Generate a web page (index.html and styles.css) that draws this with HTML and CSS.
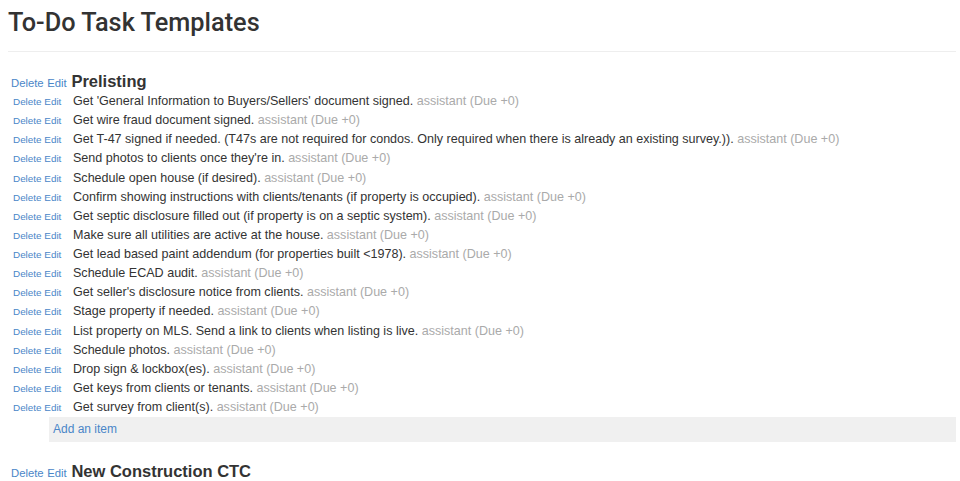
FILE: index.html
```html
<!DOCTYPE html>
<html>
<head>
<meta charset="utf-8">
<link rel="stylesheet" href="styles.css">
</head>
<body>
<div class="page">
  <h1 class="title">To-Do Task Templates</h1>
  <hr class="rule">

  <div class="group">
    <div class="group-head">
      <a class="link">Delete</a> <a class="link">Edit</a> <span class="group-name">Prelisting</span>
    </div>
    <ul class="items">
      <li class="item"><span class="actions"><a class="link">Delete</a> <a class="link">Edit</a></span><span class="text">Get 'General Information to Buyers/Sellers' document signed. <span class="meta">assistant (Due +0)</span></span></li>
      <li class="item"><span class="actions"><a class="link">Delete</a> <a class="link">Edit</a></span><span class="text">Get wire fraud document signed. <span class="meta">assistant (Due +0)</span></span></li>
      <li class="item"><span class="actions"><a class="link">Delete</a> <a class="link">Edit</a></span><span class="text">Get T-47 signed if needed. (T47s are not required for condos. Only required when there is already an existing survey.)). <span class="meta">assistant (Due +0)</span></span></li>
      <li class="item"><span class="actions"><a class="link">Delete</a> <a class="link">Edit</a></span><span class="text">Send photos to clients once they're in. <span class="meta">assistant (Due +0)</span></span></li>
      <li class="item"><span class="actions"><a class="link">Delete</a> <a class="link">Edit</a></span><span class="text">Schedule open house (if desired). <span class="meta">assistant (Due +0)</span></span></li>
      <li class="item"><span class="actions"><a class="link">Delete</a> <a class="link">Edit</a></span><span class="text">Confirm showing instructions with clients/tenants (if property is occupied). <span class="meta">assistant (Due +0)</span></span></li>
      <li class="item"><span class="actions"><a class="link">Delete</a> <a class="link">Edit</a></span><span class="text">Get septic disclosure filled out (if property is on a septic system). <span class="meta">assistant (Due +0)</span></span></li>
      <li class="item"><span class="actions"><a class="link">Delete</a> <a class="link">Edit</a></span><span class="text">Make sure all utilities are active at the house. <span class="meta">assistant (Due +0)</span></span></li>
      <li class="item"><span class="actions"><a class="link">Delete</a> <a class="link">Edit</a></span><span class="text">Get lead based paint addendum (for properties built &lt;1978). <span class="meta">assistant (Due +0)</span></span></li>
      <li class="item"><span class="actions"><a class="link">Delete</a> <a class="link">Edit</a></span><span class="text">Schedule ECAD audit. <span class="meta">assistant (Due +0)</span></span></li>
      <li class="item"><span class="actions"><a class="link">Delete</a> <a class="link">Edit</a></span><span class="text">Get seller's disclosure notice from clients. <span class="meta">assistant (Due +0)</span></span></li>
      <li class="item"><span class="actions"><a class="link">Delete</a> <a class="link">Edit</a></span><span class="text">Stage property if needed. <span class="meta">assistant (Due +0)</span></span></li>
      <li class="item"><span class="actions"><a class="link">Delete</a> <a class="link">Edit</a></span><span class="text">List property on MLS. Send a link to clients when listing is live. <span class="meta">assistant (Due +0)</span></span></li>
      <li class="item"><span class="actions"><a class="link">Delete</a> <a class="link">Edit</a></span><span class="text">Schedule photos. <span class="meta">assistant (Due +0)</span></span></li>
      <li class="item"><span class="actions"><a class="link">Delete</a> <a class="link">Edit</a></span><span class="text">Drop sign &amp; lockbox(es). <span class="meta">assistant (Due +0)</span></span></li>
      <li class="item"><span class="actions"><a class="link">Delete</a> <a class="link">Edit</a></span><span class="text">Get keys from clients or tenants. <span class="meta">assistant (Due +0)</span></span></li>
      <li class="item"><span class="actions"><a class="link">Delete</a> <a class="link">Edit</a></span><span class="text">Get survey from client(s). <span class="meta">assistant (Due +0)</span></span></li>
    </ul>
    <div class="add-item"><a class="link">Add an item</a></div>
  </div>

  <div class="group">
    <div class="group-head">
      <a class="link">Delete</a> <a class="link">Edit</a> <span class="group-name">New Construction CTC</span>
    </div>
  </div>
</div>
</body>
</html>
```

FILE: styles.css
```css
html, body {
  margin: 0;
  padding: 0;
  background: #ffffff;
}

body {
  font-family: "Liberation Sans", Arial, sans-serif;
  color: #333333;
  font-size: 13px;
}

.page {
  padding: 0 4px 0 8px;
}

.title {
  margin: 9px 0 0;
  font-family: Roboto, "Liberation Sans", Arial, sans-serif;
  font-size: 25.3px;
  line-height: 27px;
  font-weight: 500;
  color: #333333;
}

.rule {
  margin: 15px 0 0;
  border: 0;
  border-top: 1px solid #eeeeee;
  height: 0;
}

.group-head {
  margin-top: 19px;
  padding-left: 3px;
  line-height: 20px;
  height: 20px;
}

.group-head .link {
  font-size: 11.3px;
}

.group-name {
  font-size: 16.5px;
  font-weight: bold;
  color: #333333;
  margin-left: 1px;
}

.link {
  color: #4a86c8;
  text-decoration: none;
  cursor: pointer;
}

.items {
  list-style: none;
  margin: 1px 0 0;
  padding: 0;
}

.item {
  display: flex;
  align-items: baseline;
  padding-left: 5px;
  line-height: 19.125px;
  height: 19.125px;
  white-space: nowrap;
}

.actions {
  flex: 0 0 60px;
  font-size: 9.9px;
}

.text {
  font-size: 12.55px;
  color: #333333;
}

.meta {
  color: #aaaaaa;
}

.add-item {
  margin: 0 0 0 41px;
  background: #f0f0f0;
  height: 25px;
  line-height: 25px;
  padding-left: 4px;
  font-size: 12px;
}
```
